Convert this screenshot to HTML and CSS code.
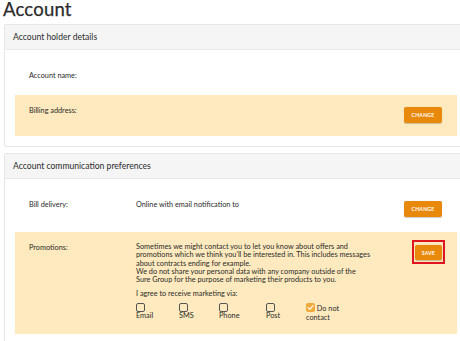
FILE: index.html
```html
<!DOCTYPE html>
<html>
<head>
<meta charset="utf-8">
<link rel="stylesheet" href="styles.css">
</head>
<body>
<div class="page">
  <h1 class="title">Account</h1>

  <section class="card">
    <div class="card-head">Account holder details</div>
    <div class="card-body">
      <div class="row row-plain">
        <div class="label">Account name:</div>
        <div class="value"></div>
        <div class="action"></div>
      </div>
      <div class="row row-hl row-billing">
        <div class="label">Billing address:</div>
        <div class="value"></div>
        <div class="action"><button class="btn btn-change">CHANGE</button></div>
      </div>
    </div>
  </section>

  <section class="card card-2">
    <div class="card-head">Account communication preferences</div>
    <div class="card-body">
      <div class="row row-plain">
        <div class="label">Bill delivery:</div>
        <div class="value">Online with email notification to</div>
        <div class="action"><button class="btn btn-change">CHANGE</button></div>
      </div>
      <div class="row row-hl row-promo">
        <div class="label">Promotions:</div>
        <div class="value">
          <p class="promo-text">Sometimes we might contact you to let you know about offers and<br>promotions which we think you'll be interested in. This includes messages<br>about contracts ending for example.<br>We do not share your personal data with any company outside of the<br>Sure Group for the purpose of marketing their products to you.</p>
          <p class="agree">I agree to receive marketing via:</p>
          <div class="opts">
            <label class="opt"><span class="box"></span><span>Email</span></label>
            <label class="opt"><span class="box"></span><span>SMS</span></label>
            <label class="opt"><span class="box"></span><span>Phone</span></label>
            <label class="opt"><span class="box"></span><span>Post</span></label>
            <label class="opt-dnc"><span class="box box-on"><svg viewBox="0 0 10 10" width="9" height="9"><path d="M2.3 5.2 L4.2 7 L7.8 3" fill="none" stroke="#fff" stroke-width="1.3" stroke-linecap="round" stroke-linejoin="round"/></svg></span> Do not contact</label>
          </div>
        </div>
        <div class="action"><span class="mark"><button class="btn btn-save">SAVE</button></span></div>
      </div>
    </div>
  </section>
</div>
</body>
</html>
```

FILE: styles.css
```css
html, body {
  margin: 0;
  padding: 0;
  background: #ffffff;
  overflow: hidden;
}

body {
  font-family: Lato, "Open Sans", sans-serif;
  color: #333333;
}

.page {
  width: 470px;
}

.title {
  margin: 0 0 0 3px;
  font-size: 18.5px;
  line-height: 19px;
  font-weight: 400;
  color: #2a2a2a;
  letter-spacing: 0.2px;
  -webkit-text-stroke: 0.25px #2a2a2a;
}

.card {
  margin: 5px 0 0 4px;
  width: 470px;
  border: 1px solid #e6e6e6;
  border-radius: 2px;
  background: #ffffff;
}

.card-2 {
  margin-top: 6px;
}

.card-head {
  height: 24px;
  line-height: 24px;
  padding-left: 8px;
  background: #f5f5f5;
  border-bottom: 1px solid #e9e9e9;
  font-size: 8.6px;
  color: #2b2b2b;
}

.card-body {
  padding: 10px 10px 10px 10px;
  width: 442px;
}

.row {
  display: grid;
  grid-template-columns: 107px 1fr auto;
  padding: 11px 15px 15px 14px;
  font-size: 7.3px;
  line-height: 9px;
  color: #2a2a2a;
}

.row-hl {
  background: #feeabe;
}

.row-billing {
  padding-bottom: 13px;
}

.row-promo {
  padding-bottom: 12px;
}

.action {
  display: flex;
  align-items: flex-start;
}

.btn {
  border: 0;
  border-radius: 2px;
  background: #e9890b;
  color: #ffffff;
  font-family: Lato, "Open Sans", sans-serif;
  font-weight: 700;
  font-size: 5.2px;
  letter-spacing: 0.2px;
  padding: 0;
  height: 16px;
  box-shadow: 0 0.5px 1px rgba(0, 0, 0, 0.2);
}

.btn-change {
  width: 38px;
  margin-top: 1px;
}

.mark {
  display: block;
  border: 2px solid #e0141e;
  padding: 3px 1px 2px 1px;
  margin-top: -3px;
  margin-right: -3px;
}

.btn-save {
  display: block;
  width: 27px;
  height: 15px;
}

.promo-text {
  margin: 0;
  line-height: 8.3px;
  white-space: nowrap;
}

.agree {
  margin: 5px 0 0 0;
}

.opts {
  display: grid;
  grid-template-columns: 43px 40px 47px 40px auto;
  margin-top: 5px;
}

.opt {
  display: flex;
  flex-direction: column;
  align-items: flex-start;
  line-height: 8px;
}

.opt-dnc {
  width: 40px;
  line-height: 9px;
}

.box {
  display: inline-block;
  border: 1px solid #555555;
  border-radius: 2px;
  box-sizing: border-box;
  vertical-align: -1px;
  width: 9px;
  height: 9px;
}

.box-on {
  background: #f2a93b;
  border-color: #f2a93b;
}

.box-on svg {
  display: block;
  margin: -1px;
}
```
